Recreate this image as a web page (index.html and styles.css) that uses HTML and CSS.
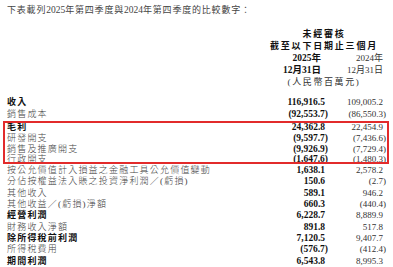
FILE: index.html
```html
<!DOCTYPE html>
<html lang="zh-Hant">
<head>
    <meta charset="UTF-8">
    <meta name="viewport" content="width=device-width, initial-scale=1.0">
    <title>第四季度比較數字</title>
    <link rel="stylesheet" href="styles.css">
</head>
<body>
    <div class="page">
        <div class="intro">下表載列<span class="num">2025</span>年第四季度與<span class="num">2024</span>年第四季度的比較數字：</div>

        <div class="head">
            <div class="cap">未經審核</div>
            <div class="cap">截至以下日期止三個月</div>
            <div class="cols"><span class="cur">2025年</span><span class="prev">2024年</span></div>
            <div class="cols"><span class="cur">12月31日</span><span class="prev">12月31日</span></div>
            <div class="unit">(人民幣百萬元)</div>
        </div>

        <div class="table">
            <div class="row strong"><span class="label">收入</span><span class="cur">116,916.5</span><span class="prev">109,005.2</span></div>
            <div class="row"><span class="label">銷售成本</span><span class="cur neg">(92,553.7)</span><span class="prev neg">(86,550.3)</span></div>
            <div class="highlight">
                <div class="row strong"><span class="label">毛利</span><span class="cur">24,362.8</span><span class="prev">22,454.9</span></div>
                <div class="row"><span class="label">研發開支</span><span class="cur neg">(9,597.7)</span><span class="prev neg">(7,436.6)</span></div>
                <div class="row"><span class="label">銷售及推廣開支</span><span class="cur neg">(9,926.9)</span><span class="prev neg">(7,729.4)</span></div>
                <div class="row"><span class="label">行政開支</span><span class="cur neg">(1,647.6)</span><span class="prev neg">(1,480.3)</span></div>
            </div>
            <div class="row"><span class="label">按公允價值計入損益之金融工具公允價值變動</span><span class="cur">1,638.1</span><span class="prev">2,578.2</span></div>
            <div class="row"><span class="label">分佔按權益法入賬之投資淨利潤／(虧損)</span><span class="cur">150.6</span><span class="prev neg">(2.7)</span></div>
            <div class="row"><span class="label">其他收入</span><span class="cur">589.1</span><span class="prev">946.2</span></div>
            <div class="row"><span class="label">其他收益／(虧損)淨額</span><span class="cur">660.3</span><span class="prev neg">(440.4)</span></div>
            <div class="row strong"><span class="label">經營利潤</span><span class="cur">6,228.7</span><span class="prev">8,889.9</span></div>
            <div class="row"><span class="label">財務收入淨額</span><span class="cur">891.8</span><span class="prev">517.8</span></div>
            <div class="row strong"><span class="label">除所得稅前利潤</span><span class="cur">7,120.5</span><span class="prev">9,407.7</span></div>
            <div class="row"><span class="label">所得稅費用</span><span class="cur neg">(576.7)</span><span class="prev neg">(412.4)</span></div>
            <div class="row strong"><span class="label">期間利潤</span><span class="cur">6,543.8</span><span class="prev">8,995.3</span></div>
        </div>
    </div>
</body>
</html>
```

FILE: styles.css
```css
* {
    box-sizing: border-box;
}
body {
    margin: 0;
    background: #fff;
    color: #333;
    font-family: "Liberation Serif", "Noto Sans CJK TC", serif;
    font-size: 9px;
}
.page {
    padding-top: 4px;
}
.intro {
    padding-left: 7px;
    line-height: 12px;
    letter-spacing: 0.8px;
    color: #444;
    white-space: nowrap;
}
.intro .num {
    letter-spacing: 0;
    font-size: 9.5px;
}
.head {
    width: 118px;
    margin: 12px 10px 0 auto;
    line-height: 12px;
    color: #111;
}
.cap {
    text-align: center;
    font-weight: bold;
    letter-spacing: 1.8px;
    white-space: nowrap;
}
.cols {
    display: grid;
    grid-template-columns: 60px 58px;
}
.head .cur {
    padding-right: 4px;
}
.unit {
    text-align: center;
    letter-spacing: 1.6px;
    color: #333;
}
.table {
    margin-top: 9.4px;
}
.row {
    display: grid;
    grid-template-columns: 1fr 60px 58px;
    padding: 0 10px 0 7px;
    height: 11.3px;
    line-height: 11.3px;
    white-space: nowrap;
}
.label {
    letter-spacing: 1.2px;
    font-weight: 300;
    color: #444;
}
.strong .label {
    font-weight: bold;
    color: #111;
}
.cur {
    text-align: right;
    font-weight: bold;
    font-size: 9.5px;
    color: #111;
}
.prev {
    text-align: right;
    color: #333;
}
.neg {
    margin-right: -3px;
}

/* red frame drawn over the four cost rows */
.highlight {
    position: relative;
    margin: 0 2px 0 1px;
    padding-top: 2px;
}
.highlight::after {
    content: "";
    position: absolute;
    top: 1px;
    bottom: 1px;
    left: 2px;
    right: 2px;
    border: 2px solid #e22b2b;
}
.highlight .row {
    padding: 0 8px 0 6px;
    height: 10.8px;
    line-height: 10.8px;
}
```
